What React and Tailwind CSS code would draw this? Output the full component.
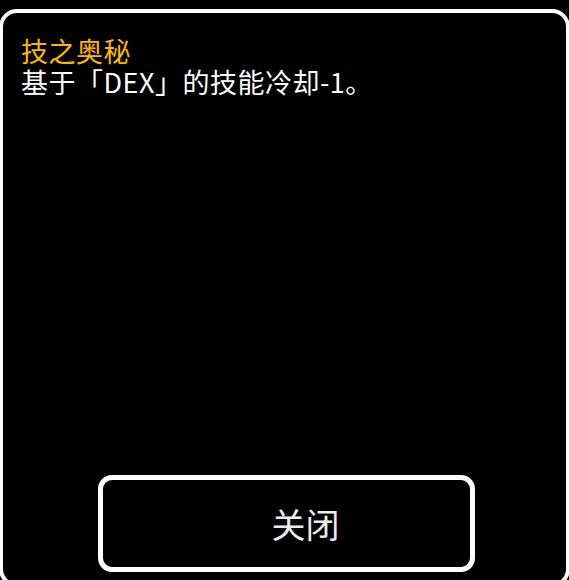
import React from "react";

export default function App() {
  return (
    <div className="w-[569px] h-[580px] overflow-hidden bg-black pt-[9px]">
      <div className="-ml-px w-[571px] h-[578px] border-[4px] border-white rounded-[18px] bg-black flex flex-col">
        <div
          className="pl-[18px] pt-[22px] text-[27px] leading-[31px] tracking-[0.5px]"
          style={{ fontFamily: '"Noto Sans CJK SC", sans-serif' }}
        >
          <div className="text-[#ffb800]">技之奥秘</div>
          <div className="text-white">基于「DEX」的技能冷却-1。</div>
        </div>
        <div className="flex-1" />
        <div className="pl-[95px] pb-[11px]">
          <button
            className="w-[377px] h-[97px] border-[5px] border-white rounded-[14px] bg-black text-[#ececec] text-[34px] pl-[38px] flex items-center justify-center"
            style={{ fontFamily: '"Noto Sans CJK SC", sans-serif' }}
          >
            关闭
          </button>
        </div>
      </div>
    </div>
  );
}
